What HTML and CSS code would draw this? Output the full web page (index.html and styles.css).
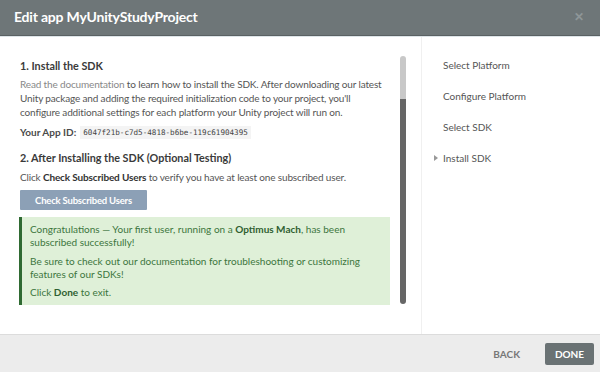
FILE: index.html
```html
<!DOCTYPE html>
<html>
<head>
<meta charset="utf-8">
<link rel="stylesheet" href="styles.css">
</head>
<body>
<div class="modal">
  <div class="header">
    <div class="title">Edit app MyUnityStudyProject</div>
    <div class="close">&#x2715;</div>
  </div>
  <div class="main">
    <div class="content">
      <div class="steps">
        <div class="h">1. Install the SDK</div>
        <p class="para intro"><span class="link">Read the documentation</span> to learn how to install the SDK. After downloading our latest Unity package and adding the required initialization code to your project, you'll<br>configure additional settings for each platform your Unity project will run on.</p>
        <div class="appid"><span class="lbl">Your App ID:</span> <code class="code">6047f21b-c7d5-4818-b6be-119c61904395</code></div>
        <div class="h h2">2. After Installing the SDK (Optional Testing)</div>
        <p class="para click">Click <b>Check Subscribed Users</b> to verify you have at least one subscribed user.</p>
        <div class="btn">Check Subscribed Users</div>
        <div class="success">
          <p>Congratulations — Your first user, running on a <b>Optimus Mach</b>, has been subscribed successfully!</p>
          <p>Be sure to check out our documentation for troubleshooting or customizing features of our SDKs!</p>
          <p>Click <b>Done</b> to exit.</p>
        </div>
      </div>
      <div class="scrollbar"><div class="track"></div><div class="thumb"></div></div>
    </div>
    <div class="sidebar">
      <div class="item">Select Platform</div>
      <div class="item">Configure Platform</div>
      <div class="item">Select SDK</div>
      <div class="item current"><span class="arrow"></span>Install SDK</div>
    </div>
  </div>
  <div class="footer">
    <div class="back">BACK</div>
    <div class="done">DONE</div>
  </div>
</div>
</body>
</html>
```
FILE: styles.css
```css
* { box-sizing: border-box; }
html, body { margin: 0; padding: 0; }
body { font-family: Lato, "Open Sans", sans-serif; color: #555; background: #fff; }
.modal { width: 600px; height: 372px; display: flex; flex-direction: column; overflow: hidden; }
.header { height: 36px; flex: none; background: #6e7678; border-bottom: 1px solid #5a6163; box-shadow: 0 1px 0 #dde4e8; display: flex; align-items: center; justify-content: space-between; padding: 0 16px 2px 14px; }
.title { color: #fff; font-weight: 700; font-size: 14px; letter-spacing: -0.2px; }
.close { color: #8e9698; font-size: 12px; font-weight: 700; }
.main { height: 297px; flex: none; display: flex; margin-top: 1px; }
.content { width: 421px; display: flex; padding: 22px 0 0 20px; }
.steps { width: 373px; }
.h { font-size: 10.8px; line-height: 14px; font-weight: 700; color: #3a3a3a; }
.h2 { margin-top: 12px; }
p { margin: 0; }
.para { font-size: 10px; line-height: 14px; margin-top: 4px; color: #555; letter-spacing: -0.15px; }
.para b { color: #333; }
.link { color: #888; }
.appid { margin-top: 6px; height: 14px; display: flex; align-items: center; font-size: 10px; }
.lbl { font-weight: 700; color: #4a4a4a; margin-right: 4px; }
.code { font-family: "DejaVu Sans Mono", monospace; font-size: 7.6px; background: #f4f4f4; padding: 2px 3px; color: #444; }
.click { margin-top: 5px; }
.btn { margin-top: 6px; width: 127px; height: 20px; background: #8ca0b6; color: #fff; font-weight: 700; font-size: 9.5px; display: flex; align-items: center; justify-content: center; border-radius: 1px; letter-spacing: -0.2px; }
.success { margin-top: 7px; margin-left: -1px; width: 371px; height: 88px; background: #dff0d8; border-left: 3px solid #2f6a32; padding: 6px 8px 0 8px; color: #3c763d; font-size: 10px; line-height: 13px; }
.success p + p { margin-top: 6px; }
.success p:last-child { margin-top: 5px; }
.success b { color: #2f5f31; }
.scrollbar { margin-left: 7px; margin-top: -3px; width: 6px; height: 248px; display: flex; flex-direction: column; }
.track { height: 43px; background: #c8c8c8; border-radius: 3px 3px 0 0; }
.thumb { flex: 1; background: #666; border-radius: 0 0 3px 3px; }
.sidebar { flex: 1; border-left: 1px solid #f0f0f0; padding: 21px 0 0 21px; }
.item { font-size: 10px; line-height: 14px; height: 31px; color: #555; position: relative; }
.arrow { position: absolute; left: -9px; top: 4px; width: 0; height: 0; border-left: 4px solid #999; border-top: 3px solid transparent; border-bottom: 3px solid transparent; }
.footer { flex: 1; background: #ececec; border-top: 1px solid #dcdcdc; display: flex; align-items: center; justify-content: flex-end; padding: 0 6px 0 0; }
.back { font-size: 10px; font-weight: 700; color: #777; margin-right: 25px; }
.done { width: 49px; height: 22px; background: #6a7274; color: #fff; font-size: 10px; font-weight: 700; display: flex; align-items: center; justify-content: center; border-radius: 2px; }
```
